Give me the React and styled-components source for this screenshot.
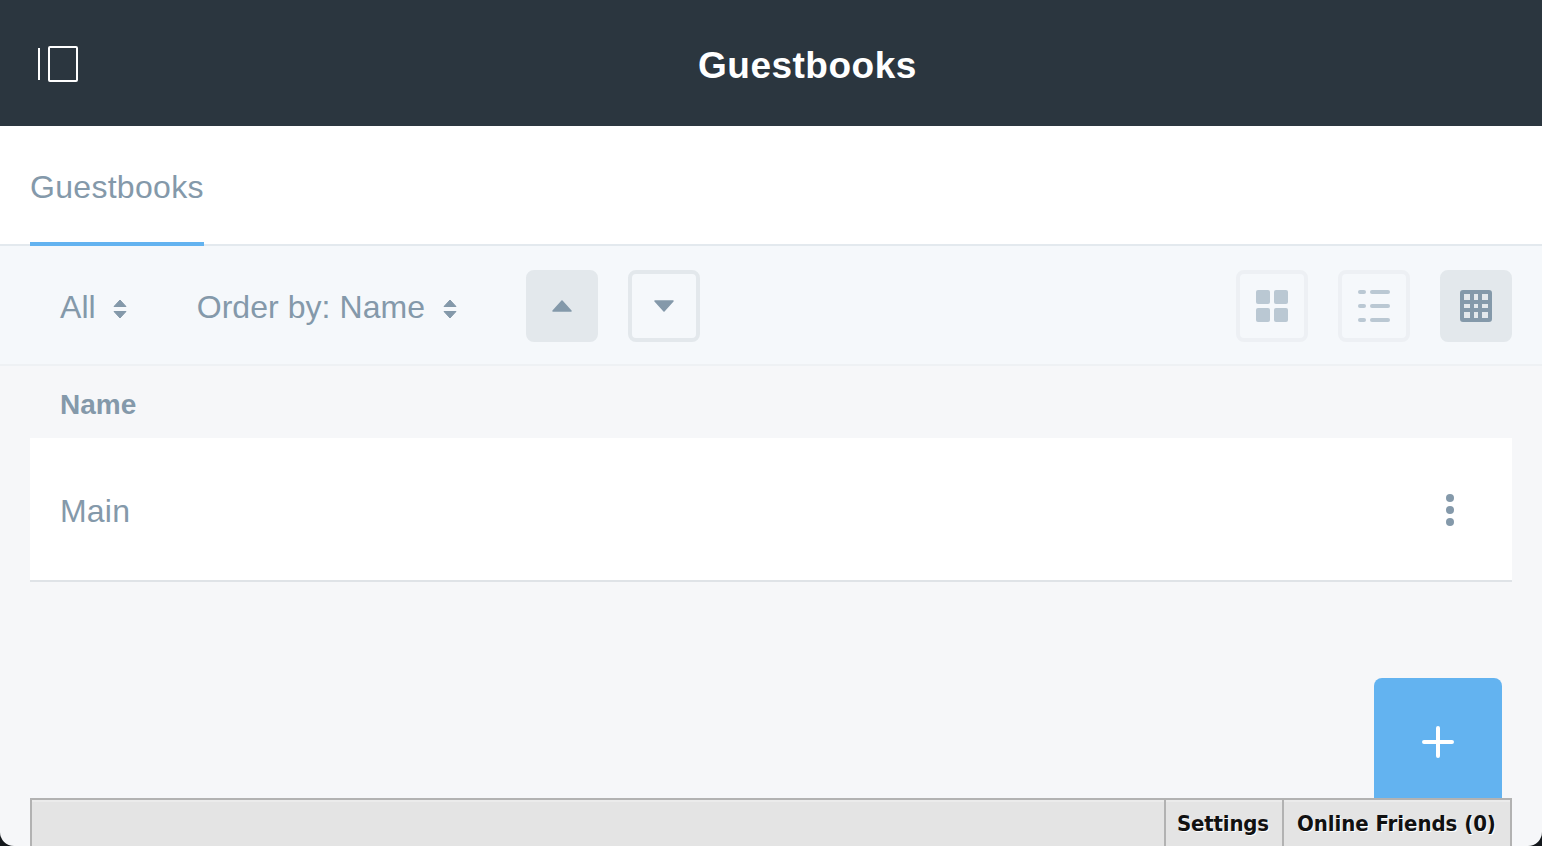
import React from "react";
import styled, { createGlobalStyle } from "styled-components";

const GlobalStyle = createGlobalStyle`
  html, body {
    margin: 0;
    padding: 0;
    background: #14181c;
  }
  body {
    font-family: "Liberation Sans", Arial, sans-serif;
    overflow: hidden;
  }
`;

const Page = styled.div`
  width: 1542px;
  height: 846px;
  display: flex;
  flex-direction: column;
  background: #f6f7f9;
  border-radius: 0 0 14px 14px;
  overflow: hidden;
`;

const Header = styled.header`
  height: 126px;
  flex: none;
  box-sizing: border-box;
  display: flex;
  align-items: center;
  padding: 2px 0 0 38px;
  background: #2b363f;
`;

const HeaderTitle = styled.h1`
  margin: 2px 0 0 620px;
  font-size: 37px;
  font-weight: 700;
  color: #fff;
  line-height: 1;
  letter-spacing: 0.5px;
`;

const TabBar = styled.nav`
  height: 120px;
  flex: none;
  box-sizing: border-box;
  display: flex;
  padding-left: 30px;
  background: #fff;
  border-bottom: 2px solid #e3e9ee;
`;

const Tab = styled.div`
  height: 120px;
  box-sizing: border-box;
  display: flex;
  align-items: center;
  padding-top: 6px;
  font-size: 32px;
  letter-spacing: 0.3px;
  color: #8499aa;
  border-bottom: 4px solid #63b3f0;
`;

const Toolbar = styled.div`
  height: 120px;
  flex: none;
  box-sizing: border-box;
  display: flex;
  align-items: center;
  padding: 2px 30px 0;
  background: #f5f8fb;
  border-bottom: 2px solid #eef1f4;
`;

const Select = styled.div`
  display: flex;
  align-items: center;
  gap: ${(p) => p.$gap}px;
  margin-left: ${(p) => p.$left}px;
  padding-top: 2px;
  font-size: 32px;
  letter-spacing: 0.05px;
  color: #8499aa;
  line-height: 1;
`;

const SortIcon = styled.svg`
  margin-top: 4px;
`;

const SquareButton = styled.button`
  width: 72px;
  height: 72px;
  box-sizing: border-box;
  padding: 0;
  margin-left: ${(p) => p.$left}px;
  display: flex;
  align-items: center;
  justify-content: center;
  border-radius: 8px;
  background: ${(p) => (p.$active ? "#e3e8ec" : "transparent")};
  border: 4px solid ${(p) => (p.$active ? "#e3e8ec" : p.$faint ? "#edf0f4" : "#e3e8ec")};
`;

const Spacer = styled.div`
  flex: 1;
`;

const Main = styled.main`
  flex: 1;
  min-height: 0;
  display: flex;
  flex-direction: column;
  padding: 0 30px;
`;

const ColumnHead = styled.div`
  height: 72px;
  flex: none;
  box-sizing: border-box;
  display: flex;
  align-items: center;
  padding: 5px 0 0 30px;
  font-size: 28px;
  font-weight: 700;
  color: #8499aa;
`;

const Row = styled.div`
  height: 144px;
  flex: none;
  box-sizing: border-box;
  display: flex;
  align-items: center;
  justify-content: space-between;
  padding: 5px 58px 0 30px;
  background: #fff;
  border-bottom: 2px solid #dfe3e7;
  font-size: 32px;
  letter-spacing: 0.2px;
  color: #8499aa;
`;

const RowMenu = styled.svg`
  margin-bottom: 4px;
`;

const FabArea = styled.div`
  flex: 1;
  display: flex;
  align-items: flex-end;
  justify-content: flex-end;
  padding-right: 10px;
`;

const Fab = styled.button`
  width: 128px;
  height: 120px;
  padding: 8px 0 0;
  border: none;
  display: flex;
  align-items: center;
  justify-content: center;
  background: #63b3f0;
  border-radius: 8px 8px 0 0;
`;

const TaskBar = styled.footer`
  height: 48px;
  flex: none;
  box-sizing: border-box;
  display: flex;
  justify-content: flex-end;
  background: #e4e4e4;
  border: 2px solid #b2b2b2;
  border-bottom: none;
  box-shadow: inset 0 2px 0 #ebebeb;
`;

const TaskItem = styled.div`
  width: ${(p) => p.$width}px;
  display: flex;
  align-items: center;
  box-sizing: border-box;
  padding: 1px 0 0 ${(p) => p.$pad}px;
  border-left: 2px solid #b2b2b2;
  font-family: "DejaVu Sans Condensed", "DejaVu Sans", Verdana, sans-serif;
  font-stretch: condensed;
  font-size: 22px;
  font-weight: 700;
  letter-spacing: ${(p) => p.$spacing}px;
  color: #111;
  text-shadow: 1px 1px 0 #fff;
  white-space: nowrap;
`;

const SortCaret = () => (
  <SortIcon width="14" height="20" viewBox="0 0 14 20">
    <path d="M7 1 L13 7.5 H1 Z M1 12.5 H13 L7 19 Z" fill="#8499aa" stroke="#8499aa" strokeWidth="1" strokeLinejoin="round" />
  </SortIcon>
);

const App = () => (
  <>
    <GlobalStyle />
    <Page>
      <Header>
        <svg width="40" height="36" viewBox="0 0 40 36">
          <rect x="0" y="2" width="2" height="32" fill="#fff" />
          <rect x="11" y="1" width="28" height="34" rx="1" fill="none" stroke="#fff" strokeWidth="2" />
        </svg>
        <HeaderTitle>Guestbooks</HeaderTitle>
      </Header>
      <TabBar>
        <Tab>Guestbooks</Tab>
      </TabBar>
      <Toolbar>
        <Select $left={30} $gap={17}>
          All <SortCaret />
        </Select>
        <Select $left={70} $gap={18}>
          Order by: Name <SortCaret />
        </Select>
        <SquareButton $active $left={69}>
          <svg width="20" height="12" viewBox="0 0 20 12">
            <path d="M10 1 L19 11 H1 Z" fill="#8499aa" stroke="#8499aa" strokeWidth="1.5" strokeLinejoin="round" />
          </svg>
        </SquareButton>
        <SquareButton $left={30}>
          <svg width="20" height="12" viewBox="0 0 20 12">
            <path d="M1 1 H19 L10 11 Z" fill="#8499aa" stroke="#8499aa" strokeWidth="1.5" strokeLinejoin="round" />
          </svg>
        </SquareButton>
        <Spacer />
        <SquareButton $faint>
          <svg width="32" height="32" viewBox="0 0 32 32" fill="#bac8d3">
            <rect x="0" y="0" width="14" height="14" rx="2" />
            <rect x="18" y="0" width="14" height="14" rx="2" />
            <rect x="0" y="18" width="14" height="14" rx="2" />
            <rect x="18" y="18" width="14" height="14" rx="2" />
          </svg>
        </SquareButton>
        <SquareButton $faint $left={30}>
          <svg width="32" height="32" viewBox="0 0 32 32" fill="#bac8d3">
            <rect x="0" y="0" width="8" height="4" rx="2" />
            <rect x="12" y="0" width="20" height="4" rx="2" />
            <rect x="0" y="14" width="8" height="4" rx="2" />
            <rect x="12" y="14" width="20" height="4" rx="2" />
            <rect x="0" y="28" width="8" height="4" rx="2" />
            <rect x="12" y="28" width="20" height="4" rx="2" />
          </svg>
        </SquareButton>
        <SquareButton $active $left={30}>
          <svg width="32" height="32" viewBox="0 0 32 32">
            <path
              fillRule="evenodd"
              fill="#8499aa"
              d="M3 0 H29 A3 3 0 0 1 32 3 V29 A3 3 0 0 1 29 32 H3 A3 3 0 0 1 0 29 V3 A3 3 0 0 1 3 0 Z M4 4 V10 H10 V4 Z M14 4 V10 H18 V4 Z M22 4 V10 H28 V4 Z M4 14 V18 H10 V14 Z M14 14 V18 H18 V14 Z M22 14 V18 H28 V14 Z M4 22 V28 H10 V22 Z M14 22 V28 H18 V22 Z M22 22 V28 H28 V22 Z"
            />
          </svg>
        </SquareButton>
      </Toolbar>
      <Main>
        <ColumnHead>Name</ColumnHead>
        <Row>
          Main
          <RowMenu width="8" height="32" viewBox="0 0 8 32" fill="#8499aa">
            <circle cx="4" cy="4" r="4" />
            <circle cx="4" cy="16" r="4" />
            <circle cx="4" cy="28" r="4" />
          </RowMenu>
        </Row>
        <FabArea>
          <Fab>
            <svg width="32" height="32" viewBox="0 0 32 32">
              <path d="M16 2 V30 M2 16 H30" stroke="#fff" strokeWidth="4" strokeLinecap="round" />
            </svg>
          </Fab>
        </FabArea>
        <TaskBar>
          <TaskItem $width={118} $pad={11} $spacing={-0.2}>Settings</TaskItem>
          <TaskItem $width={228} $pad={13} $spacing={-0.05}>Online Friends (0)</TaskItem>
        </TaskBar>
      </Main>
    </Page>
  </>
);

export default App;
